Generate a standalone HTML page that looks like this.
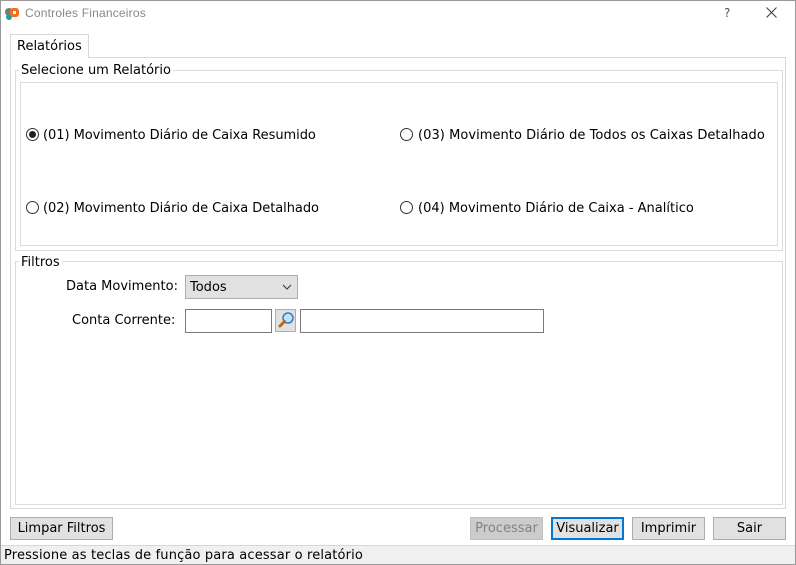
<!DOCTYPE html>
<html><head><meta charset="utf-8"><style>
*{margin:0;padding:0;box-sizing:border-box}
body{width:796px;height:565px;position:relative;background:#fff;font-family:"DejaVu Sans",sans-serif;font-size:13px;color:#000;overflow:hidden}
.a{position:absolute}
.win{left:0;top:0;width:796px;height:565px;border:1px solid #9a9a9a}
.t{white-space:nowrap}
.btn{position:absolute;background:#e1e1e1;border:1px solid #adadad;text-align:center;line-height:22px;height:23px}
.radio{position:absolute;width:13px;height:13px;border:1px solid #333;border-radius:50%;background:#fff}
</style></head><body>
<div class="a win"></div>
<svg class="a" style="left:4px;top:5px" width="16" height="16" viewBox="0 0 16 16"><circle cx="5" cy="7" r="4" fill="#7a7a7a"/><circle cx="5" cy="12" r="3" fill="#1aa39a"/><rect x="6" y="3" width="9" height="9" rx="3" fill="#f07020"/><rect x="9" y="6" width="3" height="3" fill="#fff"/></svg>
<div class="a t" style="left:25px;top:6px;font-size:12px;color:#888;font-family:'Liberation Sans',sans-serif;letter-spacing:0.2px">Controles Financeiros</div>
<div class="a t" style="left:724px;top:6px;font-size:12px;color:#555">?</div>
<svg class="a" style="left:766px;top:7px" width="11" height="11"><path d="M0.5 0.5L10.5 10.5M10.5 0.5L0.5 10.5" stroke="#444" stroke-width="1.1"/></svg>
<div class="a" style="left:10px;top:57px;width:776px;height:452px;border:1px solid #d9d9d9;background:#fff"></div>
<div class="a" style="left:10px;top:34px;width:79px;height:24px;border:1px solid #d9d9d9;border-bottom:none;background:#fff"></div>
<div class="a t" style="left:17px;top:39px">Relatórios</div>
<div class="a" style="left:15px;top:70px;width:768px;height:181px;border:1px solid #dcdcdc"></div>
<div class="a" style="left:20px;top:82px;width:758px;height:164px;border:1px solid #dcdcdc"></div>
<div class="a t" style="left:19px;top:63px;background:#fff;padding:0 2px">Selecione um Relatório</div>
<div class="radio" style="left:26px;top:128px"><div class="a" style="left:2px;top:2px;width:7px;height:7px;border-radius:50%;background:#222"></div></div>
<div class="a t" style="left:43px;top:128px;letter-spacing:-0.05px">(01) Movimento Diário de Caixa Resumido</div>
<div class="radio" style="left:26px;top:201px"></div>
<div class="a t" style="left:43px;top:201px;letter-spacing:-0.05px">(02) Movimento Diário de Caixa Detalhado</div>
<div class="radio" style="left:400px;top:128px"></div>
<div class="a t" style="left:418px;top:128px;letter-spacing:0.05px">(03) Movimento Diário de Todos os Caixas Detalhado</div>
<div class="radio" style="left:400px;top:201px"></div>
<div class="a t" style="left:418px;top:201px">(04) Movimento Diário de Caixa - Analítico</div>
<div class="a" style="left:15px;top:261px;width:768px;height:244px;border:1px solid #dcdcdc"></div>
<div class="a t" style="left:19px;top:255px;background:#fff;padding:0 2px">Filtros</div>
<div class="a t" style="left:66px;top:279px">Data Movimento:</div>
<div class="a" style="left:185px;top:275px;width:113px;height:24px;background:#e1e1e1;border:1px solid #adadad"></div>
<div class="a t" style="left:190px;top:280px">Todos</div>
<svg class="a" style="left:282px;top:284px" width="10" height="6"><path d="M1 1l4 4 4-4" fill="none" stroke="#333"/></svg>
<div class="a t" style="left:72px;top:313px">Conta Corrente:</div>
<div class="a" style="left:185px;top:309px;width:87px;height:24px;border:1px solid #7a7a7a"></div>
<div class="a" style="left:275px;top:309px;width:21px;height:23px;background:#e1e1e1;border:1px solid #adadad"></div>
<svg class="a" style="left:277px;top:311px" width="18" height="18" viewBox="0 0 18 18"><circle cx="11" cy="7" r="5" fill="#bfe3ff" stroke="#3a7ab8" stroke-width="1.5"/><path d="M7.5 10.5L3 15" stroke="#b56a1c" stroke-width="3" stroke-linecap="round"/></svg>
<div class="a" style="left:300px;top:309px;width:244px;height:24px;border:1px solid #7a7a7a"></div>
<div class="btn" style="left:10px;top:517px;width:103px">Limpar Filtros</div>
<div class="btn" style="left:470px;top:517px;width:73px;background:#cccccc;border-color:#bfbfbf;color:#838383">Processar</div>
<div class="btn" style="left:551px;top:517px;width:73px;border:2px solid #0078d7;line-height:20px">Visualizar</div>
<div class="btn" style="left:632px;top:517px;width:73px">Imprimir</div>
<div class="btn" style="left:713px;top:517px;width:73px">Sair</div>
<div class="a" style="left:1px;top:545px;width:794px;height:19px;background:#f0f0f0;border-top:1px solid #d7d7d7"></div>
<div class="a t" style="left:4px;top:548px;letter-spacing:0.15px">Pressione as teclas de função para acessar o relatório</div>
</body></html>
